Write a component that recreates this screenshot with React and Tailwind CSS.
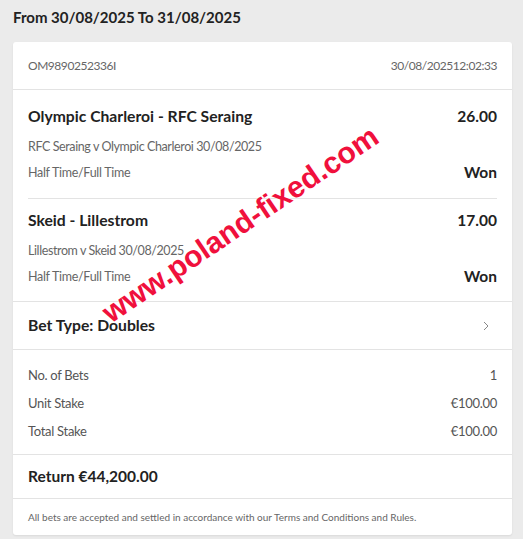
import React from "react";

const selections = [
  {
    title: "Olympic Charleroi - RFC Seraing",
    odds: "26.00",
    event: "RFC Seraing v Olympic Charleroi 30/08/2025",
    market: "Half Time/Full Time",
    result: "Won",
  },
  {
    title: "Skeid - Lillestrom",
    odds: "17.00",
    event: "Lillestrom v Skeid 30/08/2025",
    market: "Half Time/Full Time",
    result: "Won",
  },
];

const stakes = [
  ["No. of Bets", "1"],
  ["Unit Stake", "€100.00"],
  ["Total Stake", "€100.00"],
];

function Selection({ sel, last }) {
  return (
    <div className={last ? "pt-[12px] pb-[14px]" : "pt-[12px] pb-[15px] border-b border-[#e3e3e3]"}>
      <div className="flex h-[20px] items-center justify-between">
        <span className="text-[15.7px] font-bold text-[#222]">{sel.title}</span>
        <span className="text-[15.5px] font-bold text-[#222]">{sel.odds}</span>
      </div>
      <div className="mt-[10px] flex h-[20px] items-center text-[12.5px] tracking-[-0.4px] text-[#666]">
        {sel.event}
      </div>
      <div className="mt-[6px] flex h-[20px] items-center justify-between">
        <span className="text-[12.5px] tracking-[-0.3px] text-[#666]">{sel.market}</span>
        <span className="text-[15.5px] font-bold text-[#222]">{sel.result}</span>
      </div>
    </div>
  );
}

export default function App() {
  return (
    <div
      className="relative min-h-[539px] w-[523px] overflow-hidden bg-[#ebebeb] pl-[13px] pr-[11px] pt-[7px]"
      style={{ fontFamily: "Lato, 'Noto Sans', sans-serif" }}
    >
      <h1 className="flex h-[20px] items-center text-[15px] font-bold text-[#222]">
        From 30/08/2025 To 31/08/2025
      </h1>

      <div className="mt-[15px] rounded-[3px] bg-white shadow-[0_1px_2px_rgba(0,0,0,0.08)]">
        <div className="flex h-[48px] items-center justify-between border-b border-[#e3e3e3] px-[15px] text-[12px] tracking-[-0.45px] text-[#666]">
          <span>OM9890252336I</span>
          <span>30/08/202512:02:33</span>
        </div>

        <div className="border-b border-[#e3e3e3] px-[15px] pt-[5px]">
          {selections.map((sel, i) => (
            <Selection key={sel.title} sel={sel} last={i === selections.length - 1} />
          ))}
        </div>

        <div className="flex h-[48px] items-center justify-between border-b border-[#e3e3e3] px-[15px]">
          <span className="text-[15.7px] font-bold text-[#222]">Bet Type: Doubles</span>
          <svg width="8" height="10" viewBox="0 0 8 10" className="mr-[7px]">
            <path d="M2 1l4 4-4 4" fill="none" stroke="#888" strokeWidth="1" />
          </svg>
        </div>

        <div className="border-b border-[#e3e3e3] px-[15px] pt-[12px] pb-[8px]">
          {stakes.map(([label, value]) => (
            <div
              key={label}
              className="flex h-[28px] items-center justify-between text-[13px] tracking-[-0.3px] text-[#555]"
            >
              <span>{label}</span>
              <span>{value}</span>
            </div>
          ))}
        </div>

        <div className="flex h-[44px] items-center border-b border-[#e3e3e3] px-[15px] text-[15.5px] font-bold text-[#222]">
          Return €44,200.00
        </div>

        <div className="flex h-[36px] items-center px-[15px] text-[10px] text-[#666]">
          All bets are accepted and settled in accordance with our Terms and Conditions and Rules.
        </div>
      </div>

      <div
        className="pointer-events-none absolute left-[240px] top-[224px] -translate-x-1/2 -translate-y-1/2 rotate-[-34deg] whitespace-nowrap text-[30px] font-black text-[#f0103c] [text-shadow:0_0_2px_#fff]"
        style={{ fontFamily: "'Liberation Sans', Arial, sans-serif" }}
      >
        www.poland-fixed.com
      </div>
    </div>
  );
}
